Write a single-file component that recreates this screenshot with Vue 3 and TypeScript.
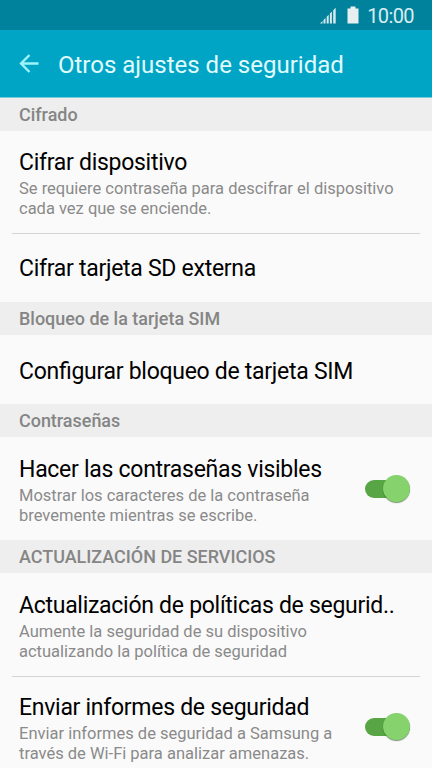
<script setup lang="ts">
interface Row {
  title: string
  lines?: string[]
  toggle?: boolean
  size: string
}
interface Section {
  heading: string
  rows: Row[]
}

const sections: Section[] = [
  {
    heading: 'Cifrado',
    rows: [
      { title: 'Cifrar dispositivo', lines: ['Se requiere contraseña para descifrar el dispositivo', 'cada vez que se enciende.'], size: 'tall' },
      { title: 'Cifrar tarjeta SD externa', size: 'single' },
    ],
  },
  { heading: 'Bloqueo de la tarjeta SIM', rows: [{ title: 'Configurar bloqueo de tarjeta SIM', size: 'single' }] },
  {
    heading: 'Contraseñas',
    rows: [
      { title: 'Hacer las contraseñas visibles', lines: ['Mostrar los caracteres de la contraseña', 'brevemente mientras se escribe.'], toggle: true, size: 'tall' },
    ],
  },
  {
    heading: 'ACTUALIZACIÓN DE SERVICIOS',
    rows: [
      { title: 'Actualización de políticas de segurid..', lines: ['Aumente la seguridad de su dispositivo', 'actualizando la política de seguridad'], size: 'tall' },
      { title: 'Enviar informes de seguridad', lines: ['Enviar informes de seguridad a Samsung a', 'través de Wi-Fi para analizar amenazas.'], toggle: true, size: 'tall' },
    ],
  },
]
</script>

<template>
  <main class="screen">
    <div class="status">
      <svg class="signal" width="17" height="17" viewBox="0 0 17 17">
        <path d="M0 16.500L2.500 14v2.500zM3.500 13L5.500 11v5.500h-2zM6.700 9.800L8.700 7.800v8.700h-2zM9.900 6.600L11.900 4.600v11.900h-2zM13.200 3.200L15.700 .700v15.800h-2.500z" fill="#d5e9ee" />
      </svg>
      <svg class="battery" width="12" height="18" viewBox="0 0 12 18">
        <path d="M3.500 .500h5v2H11.500v15H.500v-15h3z" fill="#e8eff0" />
      </svg>
      <span class="clock">10:00</span>
    </div>
    <header class="bar">
      <svg class="back" width="20" height="20" viewBox="0 0 20 20">
        <path d="M19.500 9.500H2M10.500 1L2 9.500L10.500 18" fill="none" stroke="#9df3f8" stroke-width="2.400" />
      </svg>
      <h1>Otros ajustes de seguridad</h1>
    </header>
    <section v-for="s in sections" :key="s.heading">
      <h2>{{ s.heading }}</h2>
      <div v-for="r in s.rows" :key="r.title" class="row" :class="r.size">
        <div class="text">
          <div class="title">{{ r.title }}</div>
          <div v-for="l in r.lines" :key="l" class="line">{{ l }}</div>
        </div>
        <div v-if="r.toggle" class="toggle"><span class="knob"></span></div>
      </div>
    </section>
  </main>
</template>

<style>
body {
  margin: 0;
  background: #fafafa;
}
</style>

<style scoped>
.screen {
  width: 432px;
  height: 768px;
  overflow: hidden;
  background: #fafafa;
  font-family: Roboto, sans-serif;
  color: #000;
}
.status {
  height: 30px;
  box-sizing: border-box;
  padding: 0 18px 0 0;
  display: flex;
  align-items: center;
  justify-content: flex-end;
  background: #00829c;
}
.battery {
  margin: 0 8px 0 10px;
}
.clock {
  color: #d9edf1;
  font-size: 20px;
  letter-spacing: -0.600px;
  line-height: 28px;
  padding-top: 2px;
}
.bar {
  height: 67px;
  display: flex;
  align-items: center;
  padding-left: 19px;
  background: #00a5c5;
  border-bottom: 1px solid #7ccbd9;
}
h1 {
  margin: 2px 0 0 19px;
  color: #e0fbfd;
  font-size: 24px;
  line-height: 32px;
  font-weight: 400;
}
h2 {
  margin: 0;
  height: 33.700px;
  padding-left: 19px;
  background: #eee;
  color: #858585;
  font-size: 17.950px;
  line-height: 34.600px;
  font-weight: 500;
}
section:first-of-type h2 {
  height: 32.800px;
  line-height: 34px;
}
.row {
  box-sizing: border-box;
  margin: 0 12px;
  padding: 0 7px;
  display: flex;
  justify-content: space-between;
}
.tall {
  height: 102.300px;
  padding-top: 17.300px;
}
.single {
  height: 68.500px;
  padding-top: 21.500px;
}
.row + .row {
  border-top: 1px solid #d4d4d4;
}
.row + .tall {
  padding-top: 16.300px;
}
.row + .single {
  padding-top: 20px;
}
.text {
  white-space: nowrap;
}
.title {
  font-size: 23px;
  letter-spacing: -0.280px;
  font-feature-settings: 'liga' 1;
  line-height: 30px;
  margin-bottom: 1.300px;
}
.line {
  color: #8a8a8a;
  font-size: 16.500px;
  line-height: 19.700px;
}
.toggle {
  position: relative;
  width: 45px;
  height: 18px;
  margin: 25.400px 3px 0 0;
  border-radius: 9px;
  background: #57a544;
}
.knob {
  position: absolute;
  right: 0;
  top: -5px;
  width: 27px;
  height: 27px;
  border-radius: 50%;
  background: #86d26c;
  box-shadow: 0 1px 1px rgba(40, 80, 30, 0.6);
}
</style>
